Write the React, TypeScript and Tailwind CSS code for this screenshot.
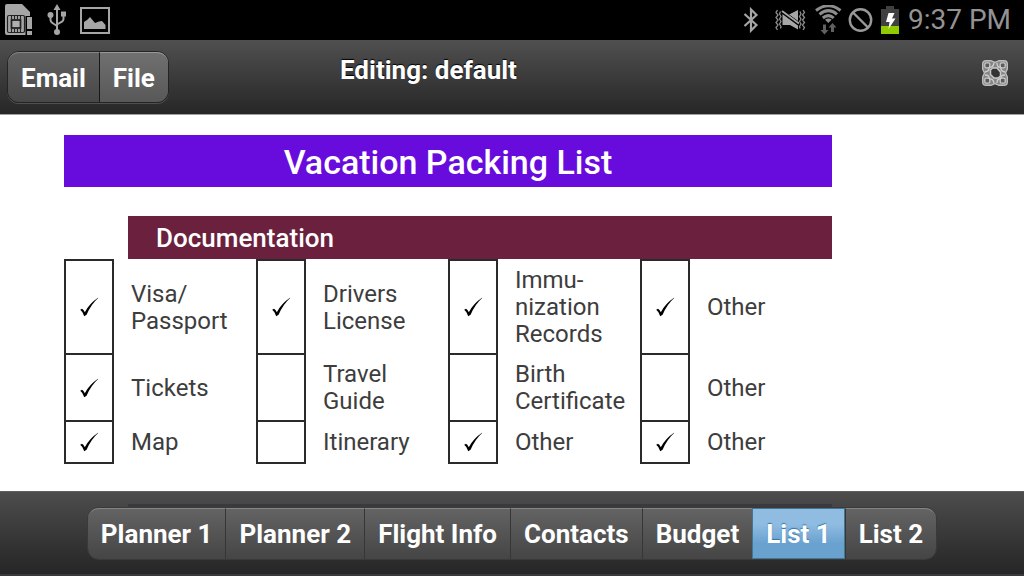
import { useState } from 'react';

type Item = { name: string; lines: string[]; packed: boolean };

const item = (name: string, packed: boolean, lines: string[] = [name]): Item => ({ name, lines, packed });

const ROWS: Item[][] = [
  [
    item('Visa/Passport', true, ['Visa/', 'Passport']),
    item('Drivers License', true, ['Drivers', 'License']),
    item('Immunization Records', true, ['Immu-', 'nization', 'Records']),
    item('Other', true),
  ],
  [
    item('Tickets', true),
    item('Travel Guide', false, ['Travel', 'Guide']),
    item('Birth Certificate', false, ['Birth', 'Certificate']),
    item('Other', false),
  ],
  [item('Map', true), item('Itinerary', false), item('Other', true), item('Other', true)],
];

const COLUMNS = [0, 1, 2, 3];

const TABS = ['Planner 1', 'Planner 2', 'Flight Info', 'Contacts', 'Budget', 'List 1', 'List 2'];

function SimIcon() {
  return (
    <svg width="28" height="32" viewBox="0 0 28 32" aria-hidden="true">
      <path d="M2 0H17L25 8V13H21V31H2Q0 31 0 29V2Q0 0 2 0Z" fill="#a6a6a6" />
      <rect x="2.5" y="11.5" width="17" height="17" rx="1.5" fill="#a6a6a6" stroke="#222" strokeWidth="1.2" />
      <rect x="6.5" y="16" width="9" height="8" fill="#b0b0b0" stroke="#111" strokeWidth="1.6" />
      <path d="M6.500 12V28M15.500 12V28M9.500 12V15M12.500 12V15M9.500 25V28M12.500 25V28" stroke="#222" strokeWidth="1.1" />
      <path d="M20.500 12H28V32H20.500Z" fill="#000" />
      <path d="M22 13H27V25H22ZM22 27H27V31H22Z" fill="#a6a6a6" />
    </svg>
  );
}

function UsbIcon() {
  return (
    <svg width="19" height="32" viewBox="0 0 19 32" aria-hidden="true" fill="#a6a6a6">
      <path d="M10 0L13.500 6H6.500Z" />
      <path d="M10 4V28M3.500 12V16Q3.500 18 5.500 19L10 22M16.500 11V15Q16.500 17 14.500 18L10 20.500" fill="none" stroke="#a6a6a6" strokeWidth="2" />
      <circle cx="3.500" cy="11" r="3" />
      <rect x="14" y="7.500" width="5" height="5" />
      <circle cx="10" cy="28" r="3" />
    </svg>
  );
}

function PictureIcon() {
  return (
    <svg width="30" height="27" viewBox="0 0 30 27" aria-hidden="true">
      <rect x="1" y="1" width="28" height="25" fill="none" stroke="#a6a6a6" strokeWidth="2" />
      <path d="M4 22V15L7 13L10 10L15 16L19 14.500L22 14L25.500 18V22Z" fill="#a6a6a6" />
    </svg>
  );
}

function BluetoothIcon() {
  return (
    <svg width="26" height="26" viewBox="0 0 26 26" aria-hidden="true">
      <path d="M1.500 7L13.500 18L8 23.500V2.500L13.500 8L1.500 19" fill="none" stroke="#a6a6a6" strokeWidth="2.200" />
    </svg>
  );
}

function MuteVibrateIcon() {
  return (
    <svg width="34" height="24" viewBox="0 0 34 24" aria-hidden="true">
      <path d="M2.500 2L1 4.500L3 7L1 9.500L3 12L1 14.500L3 17L1 19.500L2.500 22M28 2L29.500 4.500L27.500 7L29.500 9.500L27.500 12L29.500 14.500L27.500 17L29.500 19.500L28 22" fill="none" stroke="#8d8d8d" strokeWidth="1.300" />
      <path d="M5.500 3.500L4.500 6L6 8.500L4.500 11L6 13.500L4.500 16L6 18.500L5.500 20.500M25 3.500L26 6L24.500 8.500L26 11L24.500 13.500L26 16L24.500 18.500L25 20.500" fill="none" stroke="#8d8d8d" strokeWidth="1.300" />
      <path d="M7.500 6V17H15L23 21.500V17.500ZM14 6.500L23 2V13Z" fill="#a6a6a6" />
      <path d="M7 3.500L24 16" stroke="#000" strokeWidth="3.400" />
      <path d="M7 3L24 15.500" stroke="#a6a6a6" strokeWidth="1.800" />
    </svg>
  );
}

function WifiIcon() {
  return (
    <svg width="27" height="30" viewBox="0 0 27 30" aria-hidden="true">
      <path d="M1 5.500Q13.500 -4 25.500 5.500M4.500 9.300Q13.500 2 22 9.300M7.800 13Q13.500 8.300 18.700 13" fill="none" stroke="#8d8d8d" strokeWidth="3" />
      <path d="M10 14.800Q13.500 12 16.700 14.800L13.300 18Z" fill="#8d8d8d" />
      <path d="M8 19.500H11V25H13.500L9.500 29.500L5.500 25H8ZM16 27V22.500H13.500L17.500 18L21.500 22.500H19V27Z" fill="#606060" />
    </svg>
  );
}

function BlockedIcon() {
  return (
    <svg width="26" height="26" viewBox="0 0 26 26" aria-hidden="true">
      <path d="M1.800 13A10.700 10.700 0 1 0 23.200 13A10.700 10.700 0 1 0 1.800 13M5 5.500L20 20.500" fill="none" stroke="#999" strokeWidth="2.400" />
    </svg>
  );
}

function BatteryIcon() {
  return (
    <svg width="22" height="28" viewBox="0 0 22 28" aria-hidden="true">
      <path d="M6 0H14V3H19V28H1V3H6Z" fill="#404040" />
      <path d="M1 20H19V28H1Z" fill="#8fcb00" />
      <path d="M8.500 7H14.500L12 12.500H15.500L8.500 23L9.500 16H6Z" fill="#fff" />
    </svg>
  );
}

function OptionsIcon() {
  return (
    <svg width="26" height="26" viewBox="0 0 26 26" aria-hidden="true">
      <path d="M4 0.700H9L13 2.500L17 0.700H22Q25.300 0.700 25.300 4V9L23.500 13L25.300 17V22Q25.300 25.300 22 25.300H17L13 23.500L9 25.300H4Q0.700 25.300 0.700 22V17L2.500 13L0.700 9V4Q0.700 0.700 4 0.700Z" fill="#858585" stroke="#bdbdbd" strokeWidth="1.400" />
      <g fill="#5c5c5c" stroke="#c9c9c9" strokeWidth="1.300">
        <rect x="2.800" y="2.800" width="5" height="5" rx="1.500" />
        <rect x="18.200" y="2.800" width="5" height="5" rx="1.500" />
        <rect x="2.800" y="18.200" width="5" height="5" rx="1.500" />
        <rect x="18.200" y="18.200" width="5" height="5" rx="1.500" />
      </g>
      <path d="M7 7Q11 8 12 3M19 7Q15 8 15 3M7 19Q11 18 12 23M19 19Q15 18 15 23M7 7Q8 11 3 12M7 19Q8 15 3 15M19 7Q18 11 23 12M19 19Q18 15 23 15" fill="none" stroke="#cfcfcf" strokeWidth="1.300" />
      <path d="M10.500 8H15L18.500 12V16L16 18H12L8.500 14.500V10Z" fill="#333" stroke="#c9c9c9" strokeWidth="1.500" />
    </svg>
  );
}

function CheckMark() {
  return (
    <svg
      width="20"
      height="20"
      viewBox="0 0 20 20"
      aria-hidden="true"
      className="pointer-events-none invisible col-start-1 row-start-1 peer-checked:visible"
    >
      <path d="M1.200 12.800L3 11.800Q4.600 12.500 5.800 15.200Q10.500 6.500 19 0.800L19.200 1.100Q12.200 7.200 7.600 17.800L5.200 19.300Q3.800 14.500 1.200 12.800Z" fill="#000" />
    </svg>
  );
}

export default function App() {
  const [tab, setTab] = useState('List 1');

  return (
    <div className="flex min-h-screen flex-col bg-white font-[Roboto,sans-serif]">
      <div className="flex h-10 items-center justify-between bg-black pr-[13px] pl-[5px]">
        <div className="flex items-center gap-[14px]">
          <SimIcon />
          <UsbIcon />
          <PictureIcon />
        </div>
        <div className="flex items-center gap-[6px]">
          <BluetoothIcon />
          <MuteVibrateIcon />
          <WifiIcon />
          <BlockedIcon />
          <BatteryIcon />
          <time className="text-[28px] leading-10 text-[#939393]">9:37 PM</time>
        </div>
      </div>

      <header className="flex h-[75px] items-start border-b border-[#a0a0a0] bg-linear-to-b from-[#505050] to-[#272727] pr-4 pl-[7px] text-[26px] font-bold text-white [text-shadow:0_-1px_1px_#000]">
        <div className="mt-[11px] flex rounded-xl border border-[#242424] shadow-[0_1px_0_#505050]">
          <button type="button" className="h-[50px] rounded-l-[11px] border-t border-[#858585] bg-linear-to-b from-[#606060] to-[#484848] px-[13px] leading-[50px]">
            Email
          </button>
          <button type="button" className="h-[50px] rounded-r-[11px] border-t border-l border-t-[#999] border-l-[#181818] bg-linear-to-b from-[#707070] to-[#585858] px-[13px] leading-[50px]">
            File
          </button>
        </div>
        <h1 className="mt-3 flex-1 pr-[294px] text-center leading-9">Editing: default</h1>
        <button type="button" aria-label="Options" className="mt-5">
          <OptionsIcon />
        </button>
      </header>

      <main className="flex-1 px-16 pt-5 pb-6">
        <div className="w-[768px]">
          <h2 className="bg-[#670cdc] pt-[2px] text-center text-[34px] leading-[50px] font-medium text-white">Vacation Packing List</h2>
          <h3 className="mt-[29px] ml-16 bg-[#6b213d] pt-[2px] pl-7 text-[26px] leading-[41px] font-medium text-white">Documentation</h3>
          <table className="w-full table-fixed border-collapse text-2xl leading-[27px] text-[#3d3d3d]">
            <colgroup>
              {COLUMNS.flatMap((c) => [
                <col key={`check-${c}`} className="w-12" />,
                <col key={`label-${c}`} className="w-36" />,
              ])}
            </colgroup>
            <tbody>
              {ROWS.map((row, r) => (
                <tr key={r} className="h-[42px]">
                  {row.flatMap((it, c) => {
                    const id = `item-${r}-${c}`;
                    return [
                      <td key={`check-${c}`} className="border-2 border-[#2a2a2a] p-0">
                        <div className="grid place-items-center">
                          <input
                            id={id}
                            type="checkbox"
                            defaultChecked={it.packed}
                            className="peer col-start-1 row-start-1 size-8 appearance-none"
                          />
                          <CheckMark />
                        </div>
                      </td>,
                      <td key={`label-${c}`} className="pt-[7px] pb-[6px] pl-[17px]">
                        <label htmlFor={id} className="block">
                          {it.lines.map((line) => (
                            <span key={line} className="block">
                              {line}
                            </span>
                          ))}
                        </label>
                      </td>,
                    ];
                  })}
                </tr>
              ))}
            </tbody>
          </table>
        </div>
      </main>

      <footer className="h-[85px] border-t border-b-2 border-t-[#606060] border-b-[#3a383c] bg-linear-to-b from-[#4d4d4d] to-[#262626] pt-3">
        <div className="ml-32 h-[3px] w-[704px] bg-[#3a393e]" />
        <nav className="flex justify-center text-[26px] font-bold text-white [text-shadow:0_-1px_1px_#000]">
          <div className="flex rounded-xl border border-[#3a3a3a] bg-linear-to-b from-[#646464] to-[#454545]">
            {TABS.map((name) => (
              <button
                key={name}
                type="button"
                aria-pressed={tab === name}
                onClick={() => setTab(name)}
                className="h-[51px] border-t border-l border-t-[#858585] border-l-[#363636] px-[13px] leading-[50px] first:rounded-l-[11px] first:border-l-0 last:rounded-r-[11px] aria-pressed:border aria-pressed:border-[#457594] aria-pressed:bg-linear-to-b aria-pressed:from-[#90bce2] aria-pressed:from-30% aria-pressed:to-[#6aa2cf] aria-pressed:to-70% aria-pressed:[text-shadow:0_-1px_1px_#3373a5]"
              >
                {name}
              </button>
            ))}
          </div>
        </nav>
      </footer>
    </div>
  );
}
